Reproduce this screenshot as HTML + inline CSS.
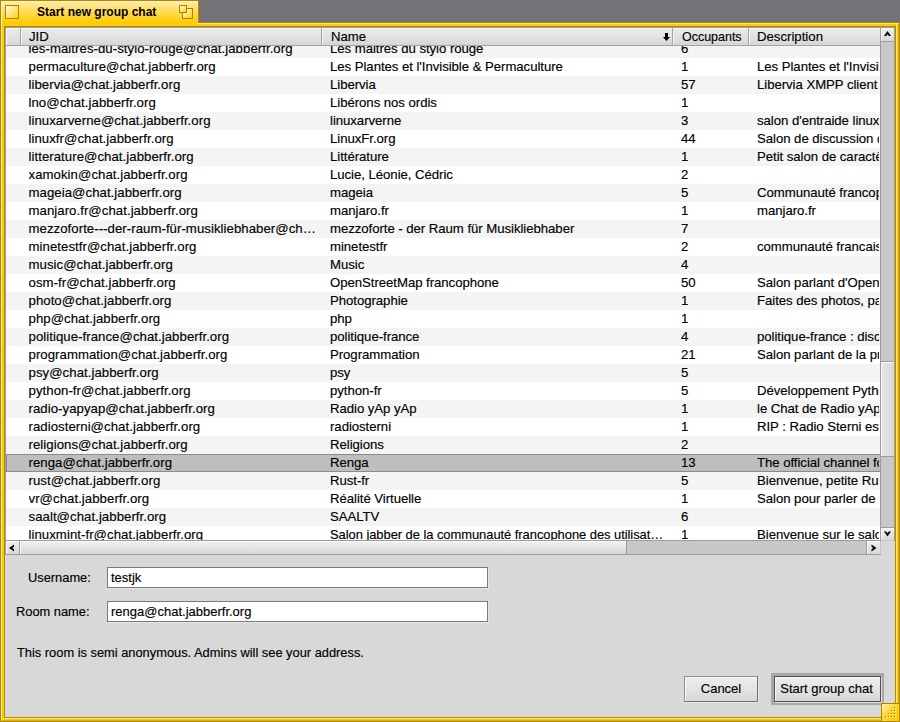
<!DOCTYPE html>
<html><head><meta charset="utf-8"><style>
*{margin:0;padding:0;box-sizing:border-box}
html,body{width:900px;height:722px;overflow:hidden;background:#747276;font-family:"Liberation Sans",sans-serif;color:#000}
.abs{position:absolute}
#tab{position:absolute;left:0;top:0;width:199px;height:23px;background:linear-gradient(#FFEDB0 0px,#FFE37A 6px,#FFCB00 22px);border:1px solid #AC8A00;border-bottom:none;box-shadow:inset 1px 1px 0 #FFF1C0}
#frame{position:absolute;left:0;top:22px;width:900px;height:700px;border:1px solid #AC8A00;background:#FFCB00;box-shadow:inset 1px 1px 0 #FFE79A, inset -1px -1px 0 #E0B000}
#tabfill{position:absolute;left:2px;top:23px;width:195px;height:1px;background:#FFCB00}
#title{position:absolute;left:37px;top:5px;font-weight:bold;font-size:12px;line-height:14px;white-space:pre}
#closebox{position:absolute;left:5px;top:5px;width:14px;height:14px;border:1px solid #A88600;background:linear-gradient(135deg,#FFFDF0 0%,#FFE680 50%,#FFCB00 100%)}
.zb{position:absolute;border:1px solid #A88600;background:linear-gradient(135deg,#FFFDF0 0%,#FFE680 50%,#FFCB00 100%)}
#innerframe{position:absolute;left:4px;top:26px;width:892px;height:692px;border:1px solid #B08E00}
#panel{position:absolute;left:5px;top:27px;width:890px;height:690px;background:#D8D8D8}
#list{position:absolute;left:5px;top:27px;width:876px;height:528px;background:#9A9CA6}
#hdr{position:absolute;left:6px;top:28px;width:874px;height:18px;background:linear-gradient(#EAEAEA 0px,#E5E5E5 7px,#D7D7D7 16px);border-bottom:1px solid #A4A4A4;box-shadow:inset 1px 1px 0 #F8F8F8}
.sep{position:absolute;top:28px;width:2px;height:17px;border-left:1px solid #A4A4A4;border-right:1px solid #F4F4F4}
.ht{position:absolute;top:28px;font-size:13.2px;line-height:17px;white-space:pre;-webkit-text-stroke:0.15px #000}
#rows{position:absolute;left:6px;top:46px;width:874px;height:494px;overflow:hidden;background:#fff}
.row{position:absolute;left:0;width:874px;height:18px;font-size:13.2px;line-height:18px;white-space:pre;letter-spacing:-0.05px;-webkit-text-stroke:0.15px #000}
.row.g{background:#F4F4F4}
.row.sel{background:#BEBEBE;box-shadow:inset 1px 1px 0 #8C8C8C, inset 0 -1px 0 #8C8C8C}
.c{position:absolute;top:0;overflow:hidden;white-space:pre}
#vsb{position:absolute;left:880px;top:28px;width:15px;height:513px;background:#C8C8C8;border-left:1px solid #9C9C9C;border-right:1px solid #9C9C9C}
#hsb{position:absolute;left:6px;top:540px;width:875px;height:15px;background:#C8C8C8;border-top:1px solid #9C9C9C;border-bottom:1px solid #9C9C9C}
#corner{position:absolute;left:881px;top:541px;width:13px;height:13px;background:#D8D8D8}
.btn{position:absolute;background:linear-gradient(#F0F0F0,#E4E4E4 50%,#D8D8D8);box-shadow:inset 1px 1px 0 #FAFAFA}
.vthumb{position:absolute;background:linear-gradient(90deg,#E8E8E8,#D8D8D8);box-shadow:inset 1px 1px 0 #FAFAFA}
.label{position:absolute;font-size:12.85px;line-height:16px;white-space:pre;-webkit-text-stroke:0.15px #000}
.field{position:absolute;left:107px;width:381px;height:21px;background:#fff;border:1px solid #7A7A7A;box-shadow:1px 1px 0 #E6E6E6}
.ftext{position:absolute;left:3px;top:1px;font-size:13px;line-height:17px;white-space:pre;-webkit-text-stroke:0.15px #000}
.pbtn{position:absolute;background:linear-gradient(#EEEEEE,#E2E2E2 55%,#D6D6D6);border:1px solid #8E8E8E;border-right-color:#727272;border-bottom-color:#727272;box-shadow:inset 1px 1px 0 #FAFAFA, 1px 1px 0 #E4E4E4;font-size:13px;text-align:center;white-space:pre;-webkit-text-stroke:0.15px #000}
#grip{position:absolute;left:881px;top:703px;width:18px;height:18px;background:linear-gradient(135deg,#FFEFB0,#FFD633 45%,#FFCB00 80%);border-left:1px solid #A88600;border-top:1px solid #A88600}

</style></head><body>
<div id="frame"></div>
<div id="tab"></div>
<div id="tabfill"></div>
<div id="closebox"></div>
<div class="zb" style="left:182px;top:8px;width:11px;height:11px"></div>
<div class="zb" style="left:179px;top:5px;width:8px;height:8px"></div>
<div id="title">Start new group chat</div>
<div id="innerframe"></div>
<div class="abs" style="left:896px;top:23px;width:1px;height:695px;background:#FFE79A"></div>
<div class="abs" style="left:3px;top:718px;width:894px;height:1px;background:#FFE79A"></div>
<div id="panel"></div>
<div id="list"></div>
<div class="abs" style="left:5px;top:27px;width:890px;height:514px;background:#9A9CA6"></div>
<div id="hdr"></div>
<div class="sep" style="left:20px"></div>
<div class="sep" style="left:321px"></div>
<div class="sep" style="left:672px"></div>
<div class="sep" style="left:748px"></div>
<div class="ht" style="left:29px">JID</div>
<div class="ht" style="left:331px">Name</div>
<div class="ht" style="left:681.5px;transform:scaleX(0.945);transform-origin:0 0">Occupants</div>
<div class="ht" style="left:757px">Description</div>
<svg class="abs" style="left:663px;top:33px" width="7" height="8" viewBox="0 0 7 8"><path d="M2 0H5V4H7L3.5 8L0 4H2Z" fill="#000"/></svg>
<div id="rows">
<div class="row g" style="top:-6px"><span class="c" style="left:22.5px;width:291.5px;letter-spacing:0.05px">les-maitres-du-stylo-rouge@chat.jabberfr.org</span><span class="c" style="left:324px;width:341px">Les maitres du stylo rouge</span><span class="c" style="left:675px;width:66px">6</span></div>
<div class="row" style="top:12px"><span class="c" style="left:22.5px;width:291.5px;letter-spacing:0.05px">permaculture@chat.jabberfr.org</span><span class="c" style="left:324px;width:341px">Les Plantes et l'Invisible &amp; Permaculture</span><span class="c" style="left:675px;width:66px">1</span><span class="c" style="left:751px;width:122px">Les Plantes et l'Invisible &amp; Permaculture</span></div>
<div class="row g" style="top:30px"><span class="c" style="left:22.5px;width:291.5px;letter-spacing:0.05px">libervia@chat.jabberfr.org</span><span class="c" style="left:324px;width:341px">Libervia</span><span class="c" style="left:675px;width:66px">57</span><span class="c" style="left:751px;width:122px">Libervia XMPP client</span></div>
<div class="row" style="top:48px"><span class="c" style="left:22.5px;width:291.5px;letter-spacing:0.05px">lno@chat.jabberfr.org</span><span class="c" style="left:324px;width:341px">Libérons nos ordis</span><span class="c" style="left:675px;width:66px">1</span></div>
<div class="row g" style="top:66px"><span class="c" style="left:22.5px;width:291.5px;letter-spacing:0.05px">linuxarverne@chat.jabberfr.org</span><span class="c" style="left:324px;width:341px">linuxarverne</span><span class="c" style="left:675px;width:66px">3</span><span class="c" style="left:751px;width:122px">salon d'entraide linux</span></div>
<div class="row" style="top:84px"><span class="c" style="left:22.5px;width:291.5px;letter-spacing:0.05px">linuxfr@chat.jabberfr.org</span><span class="c" style="left:324px;width:341px">LinuxFr.org</span><span class="c" style="left:675px;width:66px">44</span><span class="c" style="left:751px;width:122px">Salon de discussion de</span></div>
<div class="row g" style="top:102px"><span class="c" style="left:22.5px;width:291.5px;letter-spacing:0.05px">litterature@chat.jabberfr.org</span><span class="c" style="left:324px;width:341px">Littérature</span><span class="c" style="left:675px;width:66px">1</span><span class="c" style="left:751px;width:122px">Petit salon de caractère</span></div>
<div class="row" style="top:120px"><span class="c" style="left:22.5px;width:291.5px;letter-spacing:0.05px">xamokin@chat.jabberfr.org</span><span class="c" style="left:324px;width:341px">Lucie, Léonie, Cédric</span><span class="c" style="left:675px;width:66px">2</span></div>
<div class="row g" style="top:138px"><span class="c" style="left:22.5px;width:291.5px;letter-spacing:0.05px">mageia@chat.jabberfr.org</span><span class="c" style="left:324px;width:341px">mageia</span><span class="c" style="left:675px;width:66px">5</span><span class="c" style="left:751px;width:122px">Communauté francophone</span></div>
<div class="row" style="top:156px"><span class="c" style="left:22.5px;width:291.5px;letter-spacing:0.05px">manjaro.fr@chat.jabberfr.org</span><span class="c" style="left:324px;width:341px">manjaro.fr</span><span class="c" style="left:675px;width:66px">1</span><span class="c" style="left:751px;width:122px">manjaro.fr</span></div>
<div class="row g" style="top:174px"><span class="c" style="left:22.5px;width:291.5px;letter-spacing:0.05px">mezzoforte---der-raum-für-musikliebhaber@ch…</span><span class="c" style="left:324px;width:341px">mezzoforte - der Raum für Musikliebhaber</span><span class="c" style="left:675px;width:66px">7</span></div>
<div class="row" style="top:192px"><span class="c" style="left:22.5px;width:291.5px;letter-spacing:0.05px">minetestfr@chat.jabberfr.org</span><span class="c" style="left:324px;width:341px">minetestfr</span><span class="c" style="left:675px;width:66px">2</span><span class="c" style="left:751px;width:122px">communauté francaise</span></div>
<div class="row g" style="top:210px"><span class="c" style="left:22.5px;width:291.5px;letter-spacing:0.05px">music@chat.jabberfr.org</span><span class="c" style="left:324px;width:341px">Music</span><span class="c" style="left:675px;width:66px">4</span></div>
<div class="row" style="top:228px"><span class="c" style="left:22.5px;width:291.5px;letter-spacing:0.05px">osm-fr@chat.jabberfr.org</span><span class="c" style="left:324px;width:341px">OpenStreetMap francophone</span><span class="c" style="left:675px;width:66px">50</span><span class="c" style="left:751px;width:122px">Salon parlant d'OpenStreetMap</span></div>
<div class="row g" style="top:246px"><span class="c" style="left:22.5px;width:291.5px;letter-spacing:0.05px">photo@chat.jabberfr.org</span><span class="c" style="left:324px;width:341px">Photographie</span><span class="c" style="left:675px;width:66px">1</span><span class="c" style="left:751px;width:122px">Faites des photos, partagez</span></div>
<div class="row" style="top:264px"><span class="c" style="left:22.5px;width:291.5px;letter-spacing:0.05px">php@chat.jabberfr.org</span><span class="c" style="left:324px;width:341px">php</span><span class="c" style="left:675px;width:66px">1</span></div>
<div class="row g" style="top:282px"><span class="c" style="left:22.5px;width:291.5px;letter-spacing:0.05px">politique-france@chat.jabberfr.org</span><span class="c" style="left:324px;width:341px">politique-france</span><span class="c" style="left:675px;width:66px">4</span><span class="c" style="left:751px;width:122px">politique-france : discussion</span></div>
<div class="row" style="top:300px"><span class="c" style="left:22.5px;width:291.5px;letter-spacing:0.05px">programmation@chat.jabberfr.org</span><span class="c" style="left:324px;width:341px">Programmation</span><span class="c" style="left:675px;width:66px">21</span><span class="c" style="left:751px;width:122px">Salon parlant de la programmation</span></div>
<div class="row g" style="top:318px"><span class="c" style="left:22.5px;width:291.5px;letter-spacing:0.05px">psy@chat.jabberfr.org</span><span class="c" style="left:324px;width:341px">psy</span><span class="c" style="left:675px;width:66px">5</span></div>
<div class="row" style="top:336px"><span class="c" style="left:22.5px;width:291.5px;letter-spacing:0.05px">python-fr@chat.jabberfr.org</span><span class="c" style="left:324px;width:341px">python-fr</span><span class="c" style="left:675px;width:66px">5</span><span class="c" style="left:751px;width:122px">Développement Python</span></div>
<div class="row g" style="top:354px"><span class="c" style="left:22.5px;width:291.5px;letter-spacing:0.05px">radio-yapyap@chat.jabberfr.org</span><span class="c" style="left:324px;width:341px">Radio yAp yAp</span><span class="c" style="left:675px;width:66px">1</span><span class="c" style="left:751px;width:122px">le Chat de Radio yAp yAp</span></div>
<div class="row" style="top:372px"><span class="c" style="left:22.5px;width:291.5px;letter-spacing:0.05px">radiosterni@chat.jabberfr.org</span><span class="c" style="left:324px;width:341px">radiosterni</span><span class="c" style="left:675px;width:66px">1</span><span class="c" style="left:751px;width:122px">RIP : Radio Sterni est</span></div>
<div class="row g" style="top:390px"><span class="c" style="left:22.5px;width:291.5px;letter-spacing:0.05px">religions@chat.jabberfr.org</span><span class="c" style="left:324px;width:341px">Religions</span><span class="c" style="left:675px;width:66px">2</span></div>
<div class="row sel" style="top:408px"><span class="c" style="left:22.5px;width:291.5px;letter-spacing:0.05px">renga@chat.jabberfr.org</span><span class="c" style="left:324px;width:341px">Renga</span><span class="c" style="left:675px;width:66px">13</span><span class="c" style="left:751px;width:122px">The official channel for Renga</span></div>
<div class="row g" style="top:426px"><span class="c" style="left:22.5px;width:291.5px;letter-spacing:0.05px">rust@chat.jabberfr.org</span><span class="c" style="left:324px;width:341px">Rust-fr</span><span class="c" style="left:675px;width:66px">5</span><span class="c" style="left:751px;width:122px">Bienvenue, petite Rust</span></div>
<div class="row" style="top:444px"><span class="c" style="left:22.5px;width:291.5px;letter-spacing:0.05px">vr@chat.jabberfr.org</span><span class="c" style="left:324px;width:341px">Réalité Virtuelle</span><span class="c" style="left:675px;width:66px">1</span><span class="c" style="left:751px;width:122px">Salon pour parler de réalité</span></div>
<div class="row g" style="top:462px"><span class="c" style="left:22.5px;width:291.5px;letter-spacing:0.05px">saalt@chat.jabberfr.org</span><span class="c" style="left:324px;width:341px">SAALTV</span><span class="c" style="left:675px;width:66px">6</span></div>
<div class="row" style="top:480px"><span class="c" style="left:22.5px;width:291.5px;letter-spacing:0.05px">linuxmint-fr@chat.jabberfr.org</span><span class="c" style="left:324px;width:341px;transform:scaleX(0.981);transform-origin:0 0;width:350px">Salon jabber de la communauté francophone des utilisat…</span><span class="c" style="left:675px;width:66px">1</span><span class="c" style="left:751px;width:122px">Bienvenue sur le salon</span></div>
</div>
<div id="vsb"></div>
<div class="btn" style="left:881px;top:28px;width:13px;height:13px"></div>
<div class="abs" style="left:881px;top:41px;width:13px;height:1px;background:#9C9C9C"></div>
<div class="vthumb" style="left:881px;top:361px;width:13px;height:96px;border-top:1px solid #9C9C9C;border-bottom:1px solid #9C9C9C"></div>
<div class="abs" style="left:881px;top:527px;width:13px;height:1px;background:#9C9C9C"></div>
<div class="btn" style="left:881px;top:528px;width:13px;height:12px"></div>
<svg class="abs" style="left:884px;top:30px" width="7" height="7" viewBox="0 0 7 7"><path d="M0 6H2.2L3.5 4.2L4.8 6H7L3.5 1Z" fill="#000"/></svg>
<svg class="abs" style="left:884px;top:530px" width="7" height="7" viewBox="0 0 7 7"><path d="M0 1.5H2.2L3.5 3.3L4.8 1.5H7L3.5 6.5Z" fill="#000"/></svg>
<div id="hsb"></div>
<div class="btn" style="left:6px;top:541px;width:13px;height:13px"></div>
<div class="abs" style="left:19px;top:541px;width:1px;height:13px;background:#9C9C9C"></div>
<div class="btn" style="left:20px;top:541px;width:606px;height:13px"></div>
<div class="abs" style="left:626px;top:541px;width:1px;height:13px;background:#9C9C9C"></div>
<div class="abs" style="left:866px;top:541px;width:1px;height:13px;background:#9C9C9C"></div>
<div class="btn" style="left:867px;top:541px;width:13px;height:13px"></div>
<svg class="abs" style="left:8px;top:544px" width="7" height="8" viewBox="0 0 7 8"><path d="M6 0.5V2.7L4.2 4L6 5.3V7.5L1 4Z" fill="#000"/></svg>
<svg class="abs" style="left:871px;top:544px" width="7" height="8" viewBox="0 0 7 8"><path d="M0.5 0.5V2.7L2.3 4L0.5 5.3V7.5L5.5 4Z" fill="#000"/></svg>
<div id="corner"></div>
<div class="label" style="left:28px;top:570px">Username:</div>
<div class="field" style="top:567px"><div class="ftext">testjk</div></div>
<div class="label" style="left:16px;top:604px">Room name:</div>
<div class="field" style="top:601px"><div class="ftext">renga@chat.jabberfr.org</div></div>
<div class="label" style="left:17px;top:645px">This room is semi anonymous. Admins will see your address.</div>
<div class="pbtn" style="left:684px;top:676px;width:74px;height:26px;line-height:24px">Cancel</div>
<div class="abs" style="left:771px;top:673px;width:113px;height:32px;border:3px solid #A8A8A8"></div>
<div class="pbtn" style="left:774px;top:676px;width:107px;height:26px;line-height:24px;border-color:#4E4E4E;padding-right:2px">Start group chat</div>
<div id="grip"></div>
<div class="abs" style="left:885px;top:716px;width:1px;height:1px;background:#A88600"></div><div class="abs" style="left:886px;top:717px;width:1px;height:1px;background:#fff"></div><div class="abs" style="left:888px;top:713px;width:1px;height:1px;background:#A88600"></div><div class="abs" style="left:889px;top:714px;width:1px;height:1px;background:#fff"></div><div class="abs" style="left:888px;top:716px;width:1px;height:1px;background:#A88600"></div><div class="abs" style="left:889px;top:717px;width:1px;height:1px;background:#fff"></div><div class="abs" style="left:891px;top:710px;width:1px;height:1px;background:#A88600"></div><div class="abs" style="left:892px;top:711px;width:1px;height:1px;background:#fff"></div><div class="abs" style="left:891px;top:713px;width:1px;height:1px;background:#A88600"></div><div class="abs" style="left:892px;top:714px;width:1px;height:1px;background:#fff"></div><div class="abs" style="left:891px;top:716px;width:1px;height:1px;background:#A88600"></div><div class="abs" style="left:892px;top:717px;width:1px;height:1px;background:#fff"></div><div class="abs" style="left:894px;top:707px;width:1px;height:1px;background:#A88600"></div><div class="abs" style="left:895px;top:708px;width:1px;height:1px;background:#fff"></div><div class="abs" style="left:894px;top:710px;width:1px;height:1px;background:#A88600"></div><div class="abs" style="left:895px;top:711px;width:1px;height:1px;background:#fff"></div><div class="abs" style="left:894px;top:713px;width:1px;height:1px;background:#A88600"></div><div class="abs" style="left:895px;top:714px;width:1px;height:1px;background:#fff"></div><div class="abs" style="left:894px;top:716px;width:1px;height:1px;background:#A88600"></div><div class="abs" style="left:895px;top:717px;width:1px;height:1px;background:#fff"></div>

</body></html>
